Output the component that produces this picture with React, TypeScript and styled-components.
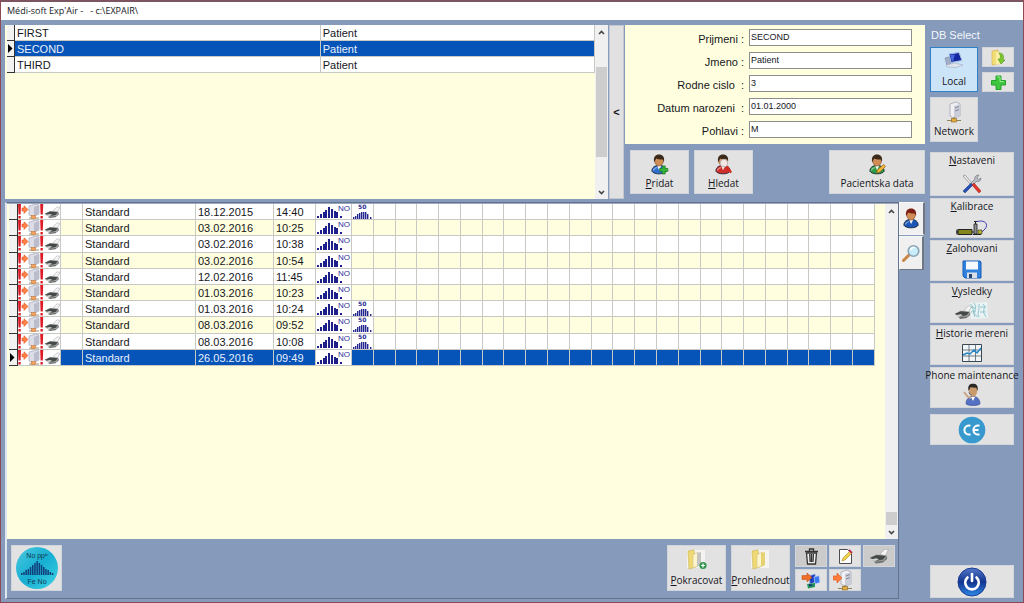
import React, { useState } from "react";
import styled, { createGlobalStyle, css } from "styled-components";

const GlobalStyle = createGlobalStyle`
  * { box-sizing: border-box; }
  html, body { margin: 0; padding: 0; }
  body { background: #7a5a66; font-family: "Liberation Sans", Arial, sans-serif; color: #16161c; }
  button, input { font: inherit; color: inherit; margin: 0; }
`;

const uiFont = `"Open Sans", "Noto Sans", sans-serif`;
const blue = "#0654b8";
const slate = "#869bbc";
const cream = "#ffffdf";
const line = "#c9c9c4";

/* ---------- window frame ---------- */

const Window = styled.div`
  display: flex;
  flex-direction: column;
  min-height: 100vh;
  background: ${slate};
  border: 1px solid #8d4a56;
  border-top: 2px solid #7c5560;
`;

const TitleBar = styled.header`
  height: 18px;
  padding: 0 6px;
  background: #fff;
  font: 9px/18px ${uiFont};
  white-space: pre;
`;

const Body = styled.div`
  flex: 1;
  display: flex;
  gap: 5px;
  padding: 5px 9px 3px 4px;
`;

const Workspace = styled.main`
  flex: 1;
  min-width: 0;
  display: flex;
  flex-direction: column;
  gap: 3px;
`;

const TopRow = styled.section`
  display: flex;
  height: 174px;
`;

/* ---------- scroll bar ---------- */

const ScrollTrack = styled.div`
  flex: none;
  display: flex;
  flex-direction: column;
  width: 13px;
  background: #f0f0f0;
`;

const ScrollArrow = styled.button`
  display: flex;
  align-items: center;
  justify-content: center;
  height: 14px;
  padding: 0;
  border: 0;
  background: transparent;
`;

const ScrollLane = styled.div<{ $before: number; $after: number }>`
  flex: 1;
  display: grid;
  grid-template-rows: ${(p) => p.$before}fr auto ${(p) => p.$after}fr;
  justify-items: center;
`;

const Thumb = styled.div<{ $size: number }>`
  grid-row: 2;
  width: 11px;
  height: ${(p) => p.$size}px;
  background: #cdcdcd;
`;

function Chevron({ down }: { down?: boolean }) {
  return (
    <svg width="7" height="5" viewBox="0 0 7 5" fill="none" stroke="#444" strokeWidth="1.6">
      <path d={down ? "M1 1l2.5 2.5L6 1" : "M1 4l2.5-2.5L6 4"} />
    </svg>
  );
}

function ScrollBar({ before, after, size }: { before: number; after: number; size: number }) {
  return (
    <ScrollTrack>
      <ScrollArrow aria-label="Scroll up"><Chevron /></ScrollArrow>
      <ScrollLane $before={before} $after={after}>
        <Thumb $size={size} />
      </ScrollLane>
      <ScrollArrow aria-label="Scroll down"><Chevron down /></ScrollArrow>
    </ScrollTrack>
  );
}

/* ---------- data tables ---------- */

const TableArea = styled.div`
  flex: 1;
  min-width: 0;
  background: ${cream};
`;

const DataTable = styled.table`
  width: 100%;
  table-layout: fixed;
  border-collapse: separate;
  border-spacing: 0;
  font-size: 11px;
  line-height: 14px;
`;

const ExamTable = styled(DataTable)`
  height: 162px;
`;

const Row = styled.tr<{ $selected?: boolean; $tint?: boolean }>`
  background: ${(p) => (p.$selected ? blue : p.$tint ? cream : "#fff")};
  color: ${(p) => (p.$selected ? "#e9f0fb" : "inherit")};
`;

const Cell = styled.td`
  height: 16px;
  padding: 1px 0 0 2px;
  border-right: 1px solid ${line};
  border-bottom: 1px solid ${line};
  white-space: nowrap;
  overflow: hidden;
`;

const IconCell = styled(Cell)<{ $plain?: boolean }>`
  padding: 0;
  line-height: 0;
  ${(p) => p.$plain && css`background: #fff;`}
  svg { display: block; }
`;

const Marker = styled.td`
  padding: 0;
  line-height: 0;
  background: #f2f2f0;
  border-right: 1px solid #333;
  border-bottom: 1px solid #333;
`;

function RowMarker({ on }: { on?: boolean }) {
  return (
    <Marker>
      {on && (
        <svg width="6" height="9" viewBox="0 0 6 9"><path d="M1 0l4.5 4.5L1 9z" fill="#000" /></svg>
      )}
    </Marker>
  );
}

const PatientPanel = styled.div`
  flex: 1;
  min-width: 0;
  display: flex;
  padding-left: 2px;
  background: ${cream};
`;

const Splitter = styled.button`
  flex: none;
  width: 15px;
  margin: 0 1px;
  padding: 0;
  border: 1px solid #c4c8d0;
  background: #e1e1e1;
  font: bold 11px "Liberation Sans", sans-serif;
`;

/* ---------- patient details ---------- */

const Details = styled.div`
  flex: none;
  width: 300px;
  display: flex;
  flex-direction: column;
`;

const Form = styled.form`
  display: flex;
  flex-direction: column;
  gap: 6px;
  height: 119px;
  padding: 4px 13px 0 0;
  background: ${cream};
`;

const Field = styled.label`
  display: grid;
  grid-template-columns: 1fr 163px;
  gap: 5px;
  height: 17px;
  font-size: 11px;
  line-height: 20px;
  text-align: right;
  white-space: pre;
`;

const TextBox = styled.input`
  width: 100%;
  height: 17px;
  padding: 0 1px 1px;
  border: 1px solid #8e8e88;
  border-radius: 0;
  background: #fff;
  font-size: 9px;
`;

const PatientActions = styled.div`
  flex: 1;
  display: flex;
  align-items: center;
  gap: 5px;
  padding-left: 5px;
`;

/* ---------- buttons ---------- */

const Button = styled.button<{ $active?: boolean; $w?: number; $h: number; $push?: boolean }>`
  flex: none;
  display: flex;
  flex-direction: column;
  align-items: center;
  justify-content: center;
  width: ${(p) => (p.$w ? `${p.$w}px` : "auto")};
  height: ${(p) => p.$h}px;
  padding: 0;
  border: 1px solid ${(p) => (p.$active ? "#2f80c6" : "#d2d5da")};
  background: ${(p) => (p.$active ? "#cce4f7" : "#e2e2e2")};
  margin-left: ${(p) => (p.$push ? "auto" : "0")};
  font: 10px/14px ${uiFont};
  white-space: nowrap;
  u { text-underline-offset: 1px; }
  svg { flex: none; display: block; }
`;

const CaptionedButton = styled(Button)`
  justify-content: space-between;
  padding: 3px 0 3px;
`;

const MenuButton = styled(Button)`
  justify-content: space-between;
  padding: 0 0 1px;
`;

const GreyButton = styled(Button)`
  background: #cbcbcb;
`;

/* ---------- examinations ---------- */

const ExamSection = styled.section`
  flex: 1;
  display: flex;
`;

const ExamPanel = styled.div`
  flex: 1;
  min-width: 0;
  display: flex;
  flex-direction: column;
  border: 1px solid #64748f;
  border-left: 2px solid #dfe6f0;
`;

const ExamGrid = styled.div`
  flex: 1;
  display: flex;
  padding-left: 2px;
  background: ${cream};
  border-top: 1px solid #9aa7bd;
`;

const ExamTableArea = styled(TableArea)`
  padding-right: 10px;
`;

const BottomBar = styled.footer`
  display: flex;
  align-items: flex-start;
  gap: 5px;
  height: 59px;
  padding: 6px 3px 0 4px;
`;

const Tools = styled.div`
  display: grid;
  grid-template-columns: repeat(3, 32px);
  gap: 2px;
`;

const Tabs = styled.nav`
  flex: none;
  width: 26px;
  display: flex;
  flex-direction: column;
  gap: 1px;
`;

const Tab = styled.button<{ $on?: boolean }>`
  display: flex;
  align-items: center;
  justify-content: center;
  width: ${(p) => (p.$on ? 26 : 25)}px;
  height: ${(p) => (p.$on ? 33 : 34)}px;
  padding: 0;
  border: 1px solid #f8f8f8;
  border-right: 2px solid #707782;
  border-bottom: ${(p) => (p.$on ? "1px solid #f8f8f8" : "1px solid #707782")};
  background: #f0f0f0;
`;

/* ---------- side bar ---------- */

const Side = styled.aside`
  flex: none;
  width: 84px;
  display: flex;
  flex-direction: column;
`;

const SideTitle = styled.h2`
  margin: 0;
  padding: 3px 1px 4px;
  font-size: 11px;
  font-weight: normal;
  line-height: 15px;
  color: #f4f7fb;
`;

const DbRow = styled.div`
  display: flex;
  justify-content: space-between;
`;

const Stack = styled.div`
  display: flex;
  flex-direction: column;
  gap: 5px;
`;

const Menu = styled.nav`
  display: flex;
  flex-direction: column;
  gap: 2px;
  margin: 10px 0 6px;
`;

const Bottom = styled.div`
  display: flex;
  flex-direction: column;
  margin-top: auto;
  padding-bottom: 1px;
`;

/* ---------- icons ---------- */

type Extra = "plus" | "search" | "pencil" | "none";

function Person({ coat, extra = "none", hair = "#3a2a1c" }: { coat: string; extra?: Extra; hair?: string }) {
  return (
    <svg width="19" height="21" viewBox="0 0 20 22">
      <path d="M2 18c0-4 3-6 7.500-6s7.500 2 7.500 6c-2 3.800-13 3.800-15 0z" fill={coat} stroke="#1c2530" strokeWidth=".9" />
      <path d="M3.500 17.500c.5-2 2-3 4-3.300" fill="none" stroke="#fff" strokeOpacity=".45" strokeWidth="1.200" />
      <path d="M7.500 12l2 5 2.500-5z" fill="#f4f4f4" />
      <ellipse cx="9.500" cy="7.200" rx="4.600" ry="5.400" fill="#d08d55" stroke="#70441f" strokeWidth=".5" />
      <path d="M4.300 8.500C3.400 2.500 6 .4 9.500.4s6.200 2.100 5.200 8.100L13.600 5.800C11 6 8 5.600 6.500 4.800z" fill={hair} />
      {extra === "plus" && <path d="M13 12.500h3v2.700h2.800v3H16V21h-3v-2.800h-2.800v-3H13z" fill="#35b83a" stroke="#16721d" strokeWidth=".7" />}
      {extra === "search" && (
        <g>
          <circle cx="10.500" cy="9.500" r="4" fill="#f3e7e5" stroke="#bdb1ae" />
          <path d="M13.500 13l4.500 6.500" stroke="#d52a22" strokeWidth="2.400" />
        </g>
      )}
      {extra === "pencil" && <path d="M9 20l1-3.500 6.500-5.500 2 2-6 6z" fill="#f3b53c" stroke="#8c5b12" strokeWidth=".7" />}
    </svg>
  );
}

function Computers({ arrow }: { arrow?: boolean }) {
  return arrow ? (
    <svg width="20" height="17" viewBox="0 0 20 17">
      <path d="M8 4l6-2 1 8-6 2z" fill="#1b3fc0" stroke="#9ab0df" strokeWidth=".7" />
      <path d="M13 5l5-1.500 1 7-5 1.500z" fill="#3a7af0" stroke="#c5d6f6" strokeWidth=".7" />
      <path d="M6 12l8-1v4l-7 1.500z" fill="#23975a" />
      <path d="M8 12l5 1-5 1.500z" fill="#16306f" />
      <path d="M1 3.500h5V1l5 4.500-5 4.500V7.500H1z" fill="#f0702a" stroke="#b8440e" strokeWidth=".5" />
    </svg>
  ) : (
    <svg width="22" height="18" viewBox="0 0 22 18">
      <path d="M2 7l4-1 2 8-4 1z" fill="#a4afc9" stroke="#6d7896" strokeWidth=".5" />
      <path d="M6 3l10-1.500 3 8-11 2z" fill="#1527a0" stroke="#a9bce4" />
      <path d="M7.200 4l4.600-.6-1.500 6.400-1.500.3z" fill="#4668dc" />
      <path d="M3 14l9-2 8 2-7 2.500-9-.5z" fill="#dfe3ec" stroke="#97a1b8" strokeWidth=".5" />
    </svg>
  );
}

function Server({ arrow }: { arrow?: boolean }) {
  return (
    <svg width="24" height="22" viewBox="0 0 24 22">
      <path d="M8 3l6-2 4 2v12l-6 2-4-2z" fill="#efeff4" stroke="#9c9dac" strokeWidth=".7" />
      <path d="M12 5l6-2v12l-6 2z" fill="#cbcdd8" />
      <path d="M13 7l4-1.500M13 10l4-1.500" stroke="#71748a" strokeWidth=".8" />
      <path d="M5 19.500h14M12 16v3" stroke="#8d8554" strokeWidth="1.200" />
      <rect x="9.500" y="17.500" width="5" height="3.500" fill="#e2ad3f" stroke="#8b672a" strokeWidth=".6" />
      {arrow && <path d="M0 7h4V4l5 5-5 5v-3H0z" fill="#ff7c3b" stroke="#d4571c" strokeWidth=".6" />}
    </svg>
  );
}

function PrinterShape() {
  return (
    <g>
      <path d="M11 6l5-5 3.500.8-3.500 6.200z" fill="#f4f4f4" stroke="#a0a0a0" strokeWidth=".6" />
      <path d="M1 10l6-3.500 11 1-2.500 4.500-8 3z" fill="#9a9c9a" />
      <path d="M1 9.800l7-2.800 9 1-3 3.500-7 1.300z" fill="#454947" />
      <path d="M5 14l10-1.500 3-4.500v3l-4 3.500-7 1z" fill="#6d716f" />
      <path d="M2 11.500l5-1.300 3 1-4 1.800z" fill="#d2d4d2" />
    </g>
  );
}

function Printer() {
  return <svg width="20" height="16" viewBox="0 0 20 16"><PrinterShape /></svg>;
}

function StatusIcons() {
  return (
    <svg width="42" height="15" viewBox="0 0 42 15">
      <path d="M0 0h3l-.4 10.500H.5zM22.200 0h3l-.4 10.500h-2.200z" fill="#dd1a26" />
      <path d="M.4 12h2.300v2.500H.4zM22.500 12h2.300v2.500h-2.300z" fill="#dd1a26" />
      <path d="M4 4h2V1.800L10 5.500 6 9.500V7H4z" fill="#ff8147" stroke="#e2561b" strokeWidth=".6" />
      <path d="M11 2l7-2 3 1v9l-6 3-4-2z" fill="#dddde8" stroke="#a6a6b8" strokeWidth=".7" />
      <path d="M16 3l5-2v9l-5 2z" fill="#bcbdcc" />
      <path d="M11 14h10M15.500 11.500v2" stroke="#a38c6c" />
      <rect x="13.500" y="11.500" width="4" height="3" fill="#f5a15e" stroke="#c1702e" strokeWidth=".5" />
      <g transform="translate(26 2) scale(.82 .78)"><PrinterShape /></g>
    </svg>
  );
}

const noBars: [number, number][] = [[1, 2], [4, 4], [7, 6], [9, 8], [12, 11], [15, 9], [18, 7], [20, 6], [24, 2]];

function NoIcon() {
  return (
    <svg width="35" height="15" viewBox="0 0 35 15">
      {noBars.map(([x, h]) => <rect key={x} x={x} y={14 - h} width="2" height={h} fill="#1d2089" />)}
      <text x="22" y="7" fontFamily="Liberation Sans" fontSize="8" fill="#2a2f9c">NO</text>
    </svg>
  );
}

const fiftyBars: [number, number][] = [[1, 2], [3, 3], [5, 5], [7, 6], [9, 7], [11, 7], [13, 7], [15, 5], [18, 2]];

function FiftyIcon() {
  return (
    <svg width="21" height="15" viewBox="0 0 21 15">
      {fiftyBars.map(([x, h]) => <rect key={x} x={x} y={15 - h} width="1.400" height={h} fill="#23268f" />)}
      <text x="6" y="5" fontFamily="DejaVu Sans" fontWeight="bold" fontSize="6" fill="#2a2d92">50</text>
    </svg>
  );
}

function FolderArrow() {
  return (
    <svg width="16" height="17" viewBox="0 0 16 17">
      <path d="M2 2l6-1 1 14-7 1z" fill="#f2dc76" stroke="#d3b14a" strokeWidth=".6" />
      <path d="M6 3l6 1v10l-6 2z" fill="#ffefa4" />
      <path d="M9 4c5 0 5 4 4 7l2 0-4 4-3-5h2c1-3 0-4-1-6z" fill="#7dc82c" stroke="#4b961b" strokeWidth=".6" />
    </svg>
  );
}

function GreenPlus() {
  return (
    <svg width="15" height="15" viewBox="0 0 15 15">
      <path d="M5 1h5v4.500h4.500v4.500H10v4.500H5V10H.5V5.500H5z" fill="#3fc63f" stroke="#24a32d" />
      <path d="M6 2h3v4.500h4" fill="none" stroke="#92e98a" />
    </svg>
  );
}

function Folder({ add }: { add?: boolean }) {
  return (
    <svg width="22" height="21" viewBox="0 0 22 21">
      <path d="M1 1h18v18H1z" fill="#f4f3ef" />
      <path d="M2 2l6-1 2 17-7 2z" fill="#eed976" stroke="#c9b04d" strokeWidth=".6" />
      <path d="M7 6l5-3v14l-5 2z" fill="#fbf4cd" stroke="#cdbb78" strokeWidth=".5" />
      <path d="M11 4l4-1v13l-4 2z" fill={add ? "#c6c4c0" : "#e7d273"} />
      {add && <g><circle cx="17" cy="16.500" r="3.600" fill="#31974e" /><path d="M17 14.500v4M15 16.500h4" stroke="#fff" strokeWidth="1.200" /></g>}
    </svg>
  );
}

function WrenchDriver() {
  return (
    <svg width="22" height="20" viewBox="0 0 22 20">
      <path d="M2 2l2-1 8 9-1.500 1.500z" fill="#e8e8e8" stroke="#777" strokeWidth=".6" />
      <path d="M2 17l8-8 2 2-8 8z" fill="#244fb4" stroke="#14306f" strokeWidth=".5" />
      <path d="M10 9l4-4c-1-2 1-4 4-4l-2 3 1.500 1.500L20 4c0 3-2 4-4.500 3.500L12 11z" fill="#b8bcc2" stroke="#676c75" strokeWidth=".6" />
      <path d="M11 11l2-2 7 8-2 2z" fill="#e23428" stroke="#8e1712" strokeWidth=".5" />
    </svg>
  );
}

function Syringe() {
  return (
    <svg width="32" height="16" viewBox="0 0 32 16">
      <path d="M2 9.500h14v5H2z" fill="#84851c" stroke="#222" />
      <path d="M0 12h2M1 9.500v5M16 12h3" stroke="#222" strokeWidth="1.200" />
      <path d="M18 4h3v10h-3z" fill="#8d8d8d" stroke="#222" strokeWidth=".8" />
      <path d="M17 14.500h8M19.500 1v3M18 1.500h4" stroke="#222" />
      <path d="M22 10h4v4h-4z" fill="#b8b32b" stroke="#333" strokeWidth=".6" />
      <path d="M21 1.500c8-2 12 2.500 8 7.500l-3 3" fill="none" stroke="#4542b7" />
    </svg>
  );
}

function Floppy() {
  return (
    <svg width="20" height="19" viewBox="0 0 20 19">
      <path d="M1 1h17l1 1v16H3l-2-2z" fill="#2f83df" stroke="#1b5db5" />
      <path d="M4 1.500h12v8H4z" fill="#f7fafd" />
      <path d="M5 12.500h10V18H5z" fill="#d9dee7" />
      <path d="M7 14h3v4H7z" fill="#26456d" />
    </svg>
  );
}

function Results() {
  return (
    <svg width="36" height="20" viewBox="0 0 36 20">
      <path d="M15 2l18-1 1 16-17 1z" fill="#e9f3f4" />
      <path d="M16 3q3 1 3 5t2 8M20 2q3 3 1 7t3 7M25 3v5q-2 5 0 8M29 3q3 2 1 5t2 8M17 6l4 1M17 11l5-1M26 6h6M26 11h6" fill="none" stroke="#8cc1ca" strokeWidth=".9" />
      <g transform="translate(0 4) scale(.9)"><PrinterShape /></g>
    </svg>
  );
}

function HistoryChart() {
  return (
    <svg width="21" height="20" viewBox="0 0 21 20">
      <path d="M.5 1.500h19v17H.5z" fill="#f0f5f8" stroke="#3a4650" />
      <path d="M.5 7h19M.5 13h19M7 1.500v17M13.500 1.500v17" stroke="#53616b" strokeWidth=".8" />
      <path d="M1 12l4-2 3 1 4-4 3 3 4-5" fill="none" stroke="#2786c8" strokeWidth="1.500" />
    </svg>
  );
}

function Support() {
  return (
    <svg width="20" height="23" viewBox="0 0 20 23">
      <path d="M4 21c0-5 3-7.500 7-7.500s7 2.500 7 7.500c-3 2-11 2-14 0z" fill="#5571c4" stroke="#35488e" strokeWidth=".6" />
      <path d="M9 14l2 4 2-4z" fill="#fff" />
      <ellipse cx="11" cy="8" rx="4.200" ry="5.800" fill="#c99a6c" />
      <path d="M6.500 8C5.500 2 8 .8 11 .8s5.600 1.700 4.600 7.200l-1.400-3.200-5.700-.5z" fill="#292624" />
      <path d="M2 9l4 5 3 1" fill="none" stroke="#c9a283" strokeWidth="2" />
      <path d="M7 9q0 3 3 3" fill="none" stroke="#777" />
    </svg>
  );
}

function CeMark() {
  return (
    <svg width="28" height="28" viewBox="0 0 28 28">
      <circle cx="14" cy="14" r="13.300" fill="#3799cd" />
      <path d="M12.500 9.800a4.500 4.500 0 1 0 0 8.400M21.500 9.800a4.500 4.500 0 1 0 0 8.400M16.500 14h4" fill="none" stroke="#fff" strokeWidth="2" />
    </svg>
  );
}

function Power() {
  return (
    <svg width="30" height="30" viewBox="0 0 30 30">
      <defs>
        <linearGradient id="orb" x1="0" y1="0" x2="0" y2="1">
          <stop offset="0" stopColor="#5478c8" />
          <stop offset=".5" stopColor="#12358f" />
          <stop offset="1" stopColor="#2f8ae6" />
        </linearGradient>
      </defs>
      <circle cx="15" cy="15" r="14" fill="url(#orb)" stroke="#183b94" />
      <path d="M10.500 10.500a6.800 6.800 0 1 0 9 0" fill="none" stroke="#fff" strokeWidth="2.600" strokeLinecap="round" />
      <path d="M15 7v7" stroke="#fff" strokeWidth="2.600" strokeLinecap="round" />
    </svg>
  );
}

function Trash() {
  return (
    <svg width="15" height="17" viewBox="0 0 15 17">
      <path d="M2.500 5l1 11h8l1-11z" fill="#eee" stroke="#333" strokeWidth="1.300" />
      <path d="M1 3.500h13M5.500 3V1h4v2M5.700 6l.4 8M7.500 6v8M9.400 6l-.4 8" fill="none" stroke="#333" strokeWidth="1.300" />
    </svg>
  );
}

function EditPage() {
  return (
    <svg width="15" height="17" viewBox="0 0 15 17">
      <path d="M1.500 1.500h8l4 4v10h-12z" fill="#fff" stroke="#4c4c52" />
      <path d="M4 13l1-3 7-7 2 2-7 7z" fill="#f2d04a" stroke="#a98827" strokeWidth=".6" />
      <path d="M11 2l3 3" stroke="#b92b55" strokeWidth="1.800" />
    </svg>
  );
}

function Magnifier() {
  return (
    <svg width="19" height="19" viewBox="0 0 19 19">
      <path d="M1.500 16.500l6-6" stroke="#c98646" strokeWidth="3" strokeLinecap="round" />
      <circle cx="11.500" cy="7" r="5.300" fill="#c9edfa" stroke="#8ba2b4" strokeWidth="1.600" />
      <path d="M8.500 6q1-3 4-2.500" fill="none" stroke="#fff" strokeWidth="1.400" />
    </svg>
  );
}

const fenoBars = [2, 3, 5, 6, 8, 10, 12, 14, 12, 10, 8, 6, 5, 3, 2];

function FenoBadge() {
  return (
    <svg width="44" height="44" viewBox="0 0 44 44">
      <defs>
        <linearGradient id="feno" x1="0" y1="0" x2="1" y2="1">
          <stop offset="0" stopColor="#4cc9df" />
          <stop offset=".5" stopColor="#16aed2" />
          <stop offset="1" stopColor="#3fd3e4" />
        </linearGradient>
      </defs>
      <circle cx="22" cy="22" r="21" fill="url(#feno)" />
      {fenoBars.map((h, i) => <rect key={i} x={6 + i * 2.200} y={29 - h} width="1.500" height={h} fill="#123f7c" />)}
      <text x="22" y="12" textAnchor="middle" fontFamily="Liberation Sans" fontSize="7" fill="#10364f">No ppᵇ</text>
      <text x="22" y="38" textAnchor="middle" fontFamily="Liberation Sans" fontSize="7" fill="#10364f">Fe No</text>
    </svg>
  );
}

/* ---------- data ---------- */

const patients = [["FIRST", "Patient"], ["SECOND", "Patient"], ["THIRD", "Patient"]];

const exams = [
  { date: "18.12.2015", time: "14:40", fifty: true },
  { date: "03.02.2016", time: "10:25" },
  { date: "03.02.2016", time: "10:38" },
  { date: "03.02.2016", time: "10:54" },
  { date: "12.02.2016", time: "11:45" },
  { date: "01.03.2016", time: "10:23" },
  { date: "01.03.2016", time: "10:24", fifty: true },
  { date: "08.03.2016", time: "09:52", fifty: true },
  { date: "08.03.2016", time: "10:08", fifty: true },
  { date: "26.05.2016", time: "09:49" },
];

const fields = [
  ["Prijmeni :", "SECOND"],
  ["Jmeno :", "Patient"],
  ["Rodne cislo  :", "3"],
  ["Datum narozeni  :", "01.01.2000"],
  ["Pohlavi :", "M"],
];

const menu = [
  { label: "Nastaveni", icon: <WrenchDriver />, h: 44, underline: true },
  { label: "Kalibrace", icon: <Syringe />, h: 40, underline: true },
  { label: "Zalohovani", icon: <Floppy />, h: 41, underline: true },
  { label: "Vysledky", icon: <Results />, h: 40, underline: true },
  { label: "Historie mereni", icon: <HistoryChart />, h: 40, underline: true },
  { label: "Phone maintenance", icon: <Support />, h: 41, underline: false },
];

const spareColumns = Array.from({ length: 23 }, (_, i) => i);

function Caption({ text }: { text: string }) {
  return <span><u>{text[0]}</u>{text.slice(1)}</span>;
}

export default function App() {
  const [patient, setPatient] = useState(1);
  const [exam, setExam] = useState(9);

  return (
    <>
      <GlobalStyle />
      <Window>
        <TitleBar>{"Médi-soft Exp'Air -   - c:\\EXPAIR\\"}</TitleBar>
        <Body>
          <Workspace>
            <TopRow>
              <PatientPanel>
                <TableArea>
                  <DataTable>
                    <colgroup><col style={{ width: 8 }} /><col style={{ width: "52%" }} /><col /></colgroup>
                    <tbody>
                      {patients.map(([name, first], i) => (
                        <Row key={name} $selected={i === patient} onClick={() => setPatient(i)}>
                          <RowMarker on={i === patient} />
                          <Cell>{name}</Cell>
                          <Cell>{first}</Cell>
                        </Row>
                      ))}
                    </tbody>
                  </DataTable>
                </TableArea>
                <ScrollBar before={28} after={28} size={90} />
              </PatientPanel>
              <Splitter aria-label="Collapse details">&lt;</Splitter>
              <Details>
                <Form>
                  {fields.map(([label, value]) => (
                    <Field key={label}>
                      {label}
                      <TextBox defaultValue={value} />
                    </Field>
                  ))}
                </Form>
                <PatientActions>
                  <CaptionedButton $w={59} $h={44}><Person coat="#2e6fd0" extra="plus" /><Caption text="Pridat" /></CaptionedButton>
                  <CaptionedButton $w={59} $h={44}><Person coat="#cf2f2a" extra="search" /><Caption text="Hledat" /></CaptionedButton>
                  <CaptionedButton $w={96} $h={44} $push><Person coat="#2f9a45" extra="pencil" />Pacientska data</CaptionedButton>
                </PatientActions>
              </Details>
            </TopRow>

            <ExamSection>
              <ExamPanel>
                <ExamGrid>
                  <ExamTableArea>
                    <ExamTable>
                      <colgroup>
                        <col style={{ width: 9 }} /><col style={{ width: 43 }} /><col style={{ width: 22 }} />
                        <col style={{ width: 113 }} /><col style={{ width: 78 }} /><col style={{ width: 42 }} />
                        <col style={{ width: 36 }} /><col />
                        {spareColumns.map((c) => <col key={c} />)}
                      </colgroup>
                      <tbody>
                        {exams.map((e, i) => (
                          <Row key={i} $selected={i === exam} $tint={i % 2 === 1} onClick={() => setExam(i)}>
                            <RowMarker on={i === exam} />
                            <IconCell $plain><StatusIcons /></IconCell>
                            <Cell />
                            <Cell>Standard</Cell>
                            <Cell>{e.date}</Cell>
                            <Cell>{e.time}</Cell>
                            <IconCell $plain><NoIcon /></IconCell>
                            <IconCell $plain={e.fifty}>{e.fifty && <FiftyIcon />}</IconCell>
                            {spareColumns.map((c) => <Cell key={c} />)}
                          </Row>
                        ))}
                      </tbody>
                    </ExamTable>
                  </ExamTableArea>
                  <ScrollBar before={1} after={0} size={13} />
                </ExamGrid>
                <BottomBar>
                  <Button $w={51} $h={46} aria-label="Fe No"><FenoBadge /></Button>
                  <CaptionedButton $w={59} $h={46} $push><Folder add /><Caption text="Pokracovat" /></CaptionedButton>
                  <CaptionedButton $w={59} $h={46}><Folder /><Caption text="Prohlednout" /></CaptionedButton>
                  <Tools>
                    <GreyButton $h={22} aria-label="Delete"><Trash /></GreyButton>
                    <Button $h={22} aria-label="Edit"><EditPage /></Button>
                    <GreyButton $h={22} aria-label="Print"><Printer /></GreyButton>
                    <Button $h={22} aria-label="Export to local"><Computers arrow /></Button>
                    <Button $h={22} aria-label="Export to network"><Server arrow /></Button>
                  </Tools>
                </BottomBar>
              </ExamPanel>
              <Tabs>
                <Tab $on aria-label="Patient"><Person coat="#1c55b5" hair="#7c1f14" /></Tab>
                <Tab aria-label="Search"><Magnifier /></Tab>
              </Tabs>
            </ExamSection>
          </Workspace>

          <Side>
            <SideTitle>DB Select</SideTitle>
            <DbRow>
              <Stack>
                <CaptionedButton $active $w={48} $h={45}><Computers />Local</CaptionedButton>
                <CaptionedButton $w={48} $h={45}><Server />Network</CaptionedButton>
              </Stack>
              <Stack>
                <Button $w={32} $h={20} aria-label="Open database"><FolderArrow /></Button>
                <Button $w={32} $h={20} aria-label="Add database"><GreenPlus /></Button>
              </Stack>
            </DbRow>
            <Menu>
              {menu.map((m) => (
                <MenuButton key={m.label} $h={m.h}>
                  {m.underline ? <Caption text={m.label} /> : m.label}
                  {m.icon}
                </MenuButton>
              ))}
            </Menu>
            <Button $h={31} aria-label="CE information"><CeMark /></Button>
            <Bottom>
              <Button $h={33} aria-label="Exit"><Power /></Button>
            </Bottom>
          </Side>
        </Body>
      </Window>
    </>
  );
}
